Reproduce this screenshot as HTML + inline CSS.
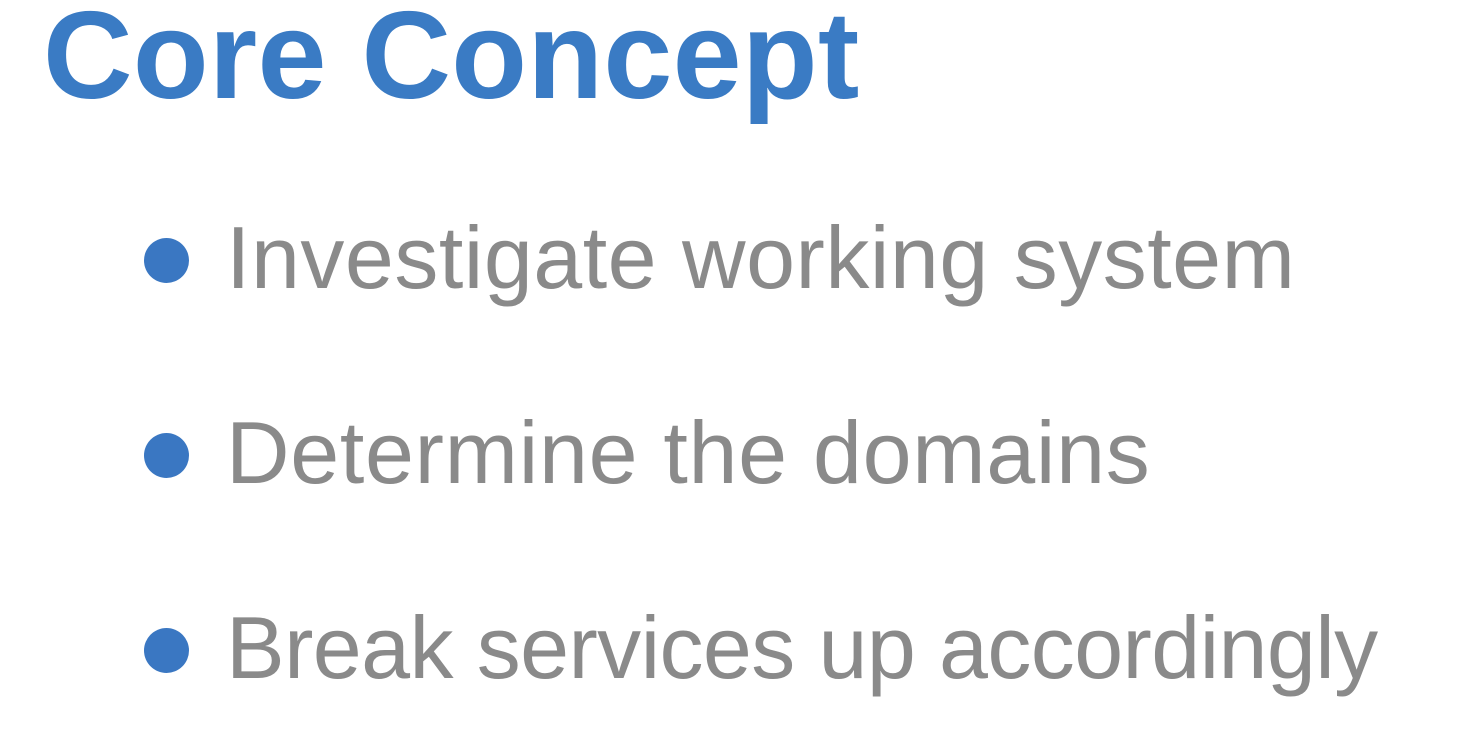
<!DOCTYPE html>
<html><head><meta charset="utf-8"><style>
html,body{margin:0;padding:0;width:1472px;height:748px;background:#fff;overflow:hidden;position:relative}
.t{position:absolute;white-space:nowrap;font-family:"Liberation Sans",sans-serif}
.h{left:43px;top:-6px;font-size:124px;line-height:124px;font-weight:bold;color:#3a7bc4;letter-spacing:0.3px}
.b{left:226px;font-size:88px;line-height:88px;color:#8a8a8a}
.d{position:absolute;left:144px;width:45px;height:45px;border-radius:50%;background:#3a77c2}
</style></head><body>
<div class="t h">Core Concept</div>
<div class="d" style="top:238px"></div>
<div class="t b" style="top:214px;letter-spacing:0.5px">Investigate working system</div>
<div class="d" style="top:433px"></div>
<div class="t b" style="top:409px;letter-spacing:0.7px">Determine the domains</div>
<div class="d" style="top:628px"></div>
<div class="t b" style="top:604px;letter-spacing:-0.6px">Break services up accordingly</div>
</body></html>
